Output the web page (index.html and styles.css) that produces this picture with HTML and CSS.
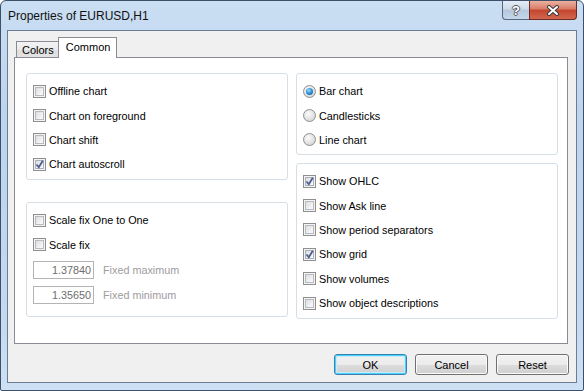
FILE: index.html
```html
<!DOCTYPE html>
<html lang="en">
<head>
    <meta charset="UTF-8">
    <title>Properties of EURUSD,H1</title>
    <link rel="stylesheet" href="styles.css">
</head>
<body>
    <div class="window">
        <div class="titlebar">
            <span class="title">Properties of EURUSD,H1</span>
            <div class="caption-buttons">
                <span class="cap help">?</span>
                <span class="cap close">
                    <svg width="14" height="11" viewBox="0 0 14 11">
                        <path d="M3 2 L11 9 M11 2 L3 9" stroke="#3b3b3b" stroke-width="4" stroke-linecap="round"/>
                        <path d="M3 2 L11 9 M11 2 L3 9" stroke="#fff" stroke-width="2" stroke-linecap="round"/>
                    </svg>
                </span>
            </div>
        </div>

        <div class="client">
            <div class="tabs">
                <span class="tab">Colors</span>
                <span class="tab active">Common</span>
            </div>

            <div class="panel">
                <div class="col">
                    <div class="group g-chart">
                        <div class="row"><span class="check"></span>Offline chart</div>
                        <div class="row"><span class="check"></span>Chart on foreground</div>
                        <div class="row"><span class="check"></span>Chart shift</div>
                        <div class="row"><span class="check on"><svg width="11" height="11" viewBox="0 0 11 11"><path d="M2.5 5.5 L4.8 8.3 L8.8 1.8" fill="none" stroke="#4b5f93" stroke-width="1.8"/></svg></span>Chart autoscroll</div>
                    </div>
                    <div class="group g-scale">
                        <div class="row"><span class="check"></span>Scale fix One to One</div>
                        <div class="row"><span class="check"></span>Scale fix</div>
                        <div class="row field"><span class="input">1.37840</span><span class="muted">Fixed maximum</span></div>
                        <div class="row field"><span class="input">1.35650</span><span class="muted">Fixed minimum</span></div>
                    </div>
                </div>
                <div class="col">
                    <div class="group g-type">
                        <div class="row"><span class="radio on"></span>Bar chart</div>
                        <div class="row"><span class="radio"></span>Candlesticks</div>
                        <div class="row"><span class="radio"></span>Line chart</div>
                    </div>
                    <div class="group g-show">
                        <div class="row"><span class="check on"><svg width="11" height="11" viewBox="0 0 11 11"><path d="M2.5 5.5 L4.8 8.3 L8.8 1.8" fill="none" stroke="#4b5f93" stroke-width="1.8"/></svg></span>Show OHLC</div>
                        <div class="row"><span class="check"></span>Show Ask line</div>
                        <div class="row"><span class="check"></span>Show period separators</div>
                        <div class="row"><span class="check on"><svg width="11" height="11" viewBox="0 0 11 11"><path d="M2.5 5.5 L4.8 8.3 L8.8 1.8" fill="none" stroke="#4b5f93" stroke-width="1.8"/></svg></span>Show grid</div>
                        <div class="row"><span class="check"></span>Show volumes</div>
                        <div class="row"><span class="check"></span>Show object descriptions</div>
                    </div>
                </div>
            </div>

            <div class="buttons">
                <button class="default">OK</button>
                <button>Cancel</button>
                <button>Reset</button>
            </div>
        </div>
    </div>
</body>
</html>
```

FILE: styles.css
```css
* {
    box-sizing: border-box;
    margin: 0;
    padding: 0;
}

body {
    font-family: "Liberation Sans", Arial, sans-serif;
    font-size: 10.8px;
    color: #000;
    background-color: #fff;
}

.window {
    width: 584px;
    height: 391px;
    border: 1px solid #3d5068;
    border-radius: 6px 6px 2px 2px;
    background: linear-gradient(#cadef3, #bdd4ee 30%, #c3d9f1 80%, #cde0f4);
    padding: 0 6px 7px 6px;
    display: flex;
    flex-direction: column;
}

.titlebar {
    height: 29px;
    display: flex;
    flex: none;
}

.title {
    align-self: center;
    padding-left: 1px;
    margin-top: 1px;
    font-size: 12px;
    color: #111;
}

.caption-buttons {
    margin-left: auto;
    display: flex;
    align-items: flex-start;
}

.cap {
    height: 19px;
    display: flex;
    align-items: center;
    justify-content: center;
    border: 1px solid #55657a;
    border-top: none;
}

.help {
    width: 27px;
    border-right: none;
    border-radius: 0 0 0 4px;
    background: linear-gradient(#e4edf7, #ccdaea 45%, #b4c7dd 50%, #c6d7ea);
    color: #fff;
    font-weight: bold;
    font-size: 13px;
    text-shadow: -1px 0 #555, 1px 0 #555, 0 -1px #555, 0 1px #555;
}

.close {
    width: 48px;
    border-color: #6e2b22;
    border-radius: 0 0 4px 0;
    background: linear-gradient(#eab0a2, #d97b66 45%, #c4452f 50%, #d2674e);
}

.client {
    flex: 1;
    border: 1px solid #6c7d92;
    background-color: #f0f0f0;
    display: flex;
    flex-direction: column;
}

.tabs {
    height: 26px;
    padding-left: 8px;
    display: flex;
    align-items: flex-end;
    flex: none;
}

.tab {
    height: 16px;
    padding: 0 4px 0 5px;
    border: 1px solid #898c95;
    border-bottom: none;
    background: linear-gradient(#f3f3f3, #ebebeb 50%, #dedede 50%, #e3e3e3);
    line-height: 17px;
    font-size: 11px;
}

.tab.active {
    height: 21px;
    margin-left: -1px;
    margin-bottom: -1px;
    padding: 0 6px 0 7px;
    background: #fff;
    line-height: 18px;
    position: relative;
    z-index: 1;
}

.panel {
    height: 287px;
    margin: 0 8px 0 6px;
    border: 1px solid #898c95;
    background-color: #fff;
    padding: 15px 9px 0 11px;
    display: flex;
    gap: 8px;
}

.col {
    width: 262px;
    display: flex;
    flex-direction: column;
}

.group {
    border: 1px solid #d5dfe5;
    border-radius: 3px;
    padding: 5px 6px 0 6px;
}

.g-chart {
    height: 107px;
}

.g-scale {
    height: 115px;
    margin-top: 22px;
}

.g-type {
    height: 82px;
}

.g-show {
    height: 156px;
    margin-top: 8px;
}

.row {
    height: 24.4px;
    display: flex;
    align-items: center;
    gap: 3px;
    white-space: nowrap;
}

.row.field {
    height: 25.5px;
    gap: 9px;
}

.check {
    width: 13px;
    height: 13px;
    flex: none;
    border: 1px solid #8f8f8f;
    background: linear-gradient(135deg, #d6d6d6, #f6f6f6 70%, #fcfcfc);
    box-shadow: inset 0 0 0 1px #f4f4f4, inset 0 0 0 2px #b7bbc0;
    display: flex;
}

.check.on {
    box-shadow: inset 0 0 0 1px #f4f4f4, inset 0 0 0 2px #a9b1bd;
}

.radio {
    width: 13px;
    height: 13px;
    flex: none;
    border: 1px solid #8e8f8f;
    border-radius: 50%;
    background: radial-gradient(circle at 40% 35%, #fbfbfb, #e2e2e2 55%, #c9c9c9);
    display: flex;
    align-items: center;
    justify-content: center;
}

.radio.on::after {
    content: "";
    width: 7px;
    height: 7px;
    border-radius: 50%;
    background: radial-gradient(circle at 40% 35%, #9adcfb, #2a8fd6 50%, #0e4f8e);
}

.input {
    width: 61px;
    height: 18px;
    flex: none;
    border: 1px solid #b4b4b4;
    background-color: #fff;
    color: #6d6d6d;
    text-align: right;
    padding-right: 2px;
    line-height: 16px;
}

.muted {
    color: #9d9d9d;
}

.buttons {
    margin-top: 10px;
    padding-right: 7px;
    display: flex;
    justify-content: flex-end;
    gap: 8px;
}

button {
    width: 73px;
    height: 21px;
    font-family: inherit;
    font-size: 11px;
    color: #000;
    border: 1px solid #707070;
    border-radius: 3px;
    background: linear-gradient(#f2f2f2, #ebebeb 50%, #dddddd 50%, #cfcfcf);
    box-shadow: inset 0 0 0 1px #fbfbfb;
}

button.default {
    border-color: #3c7fb1;
    box-shadow: inset 0 0 0 1px #48d2f9, inset 0 0 0 2px #c6ebfc;
}
```
